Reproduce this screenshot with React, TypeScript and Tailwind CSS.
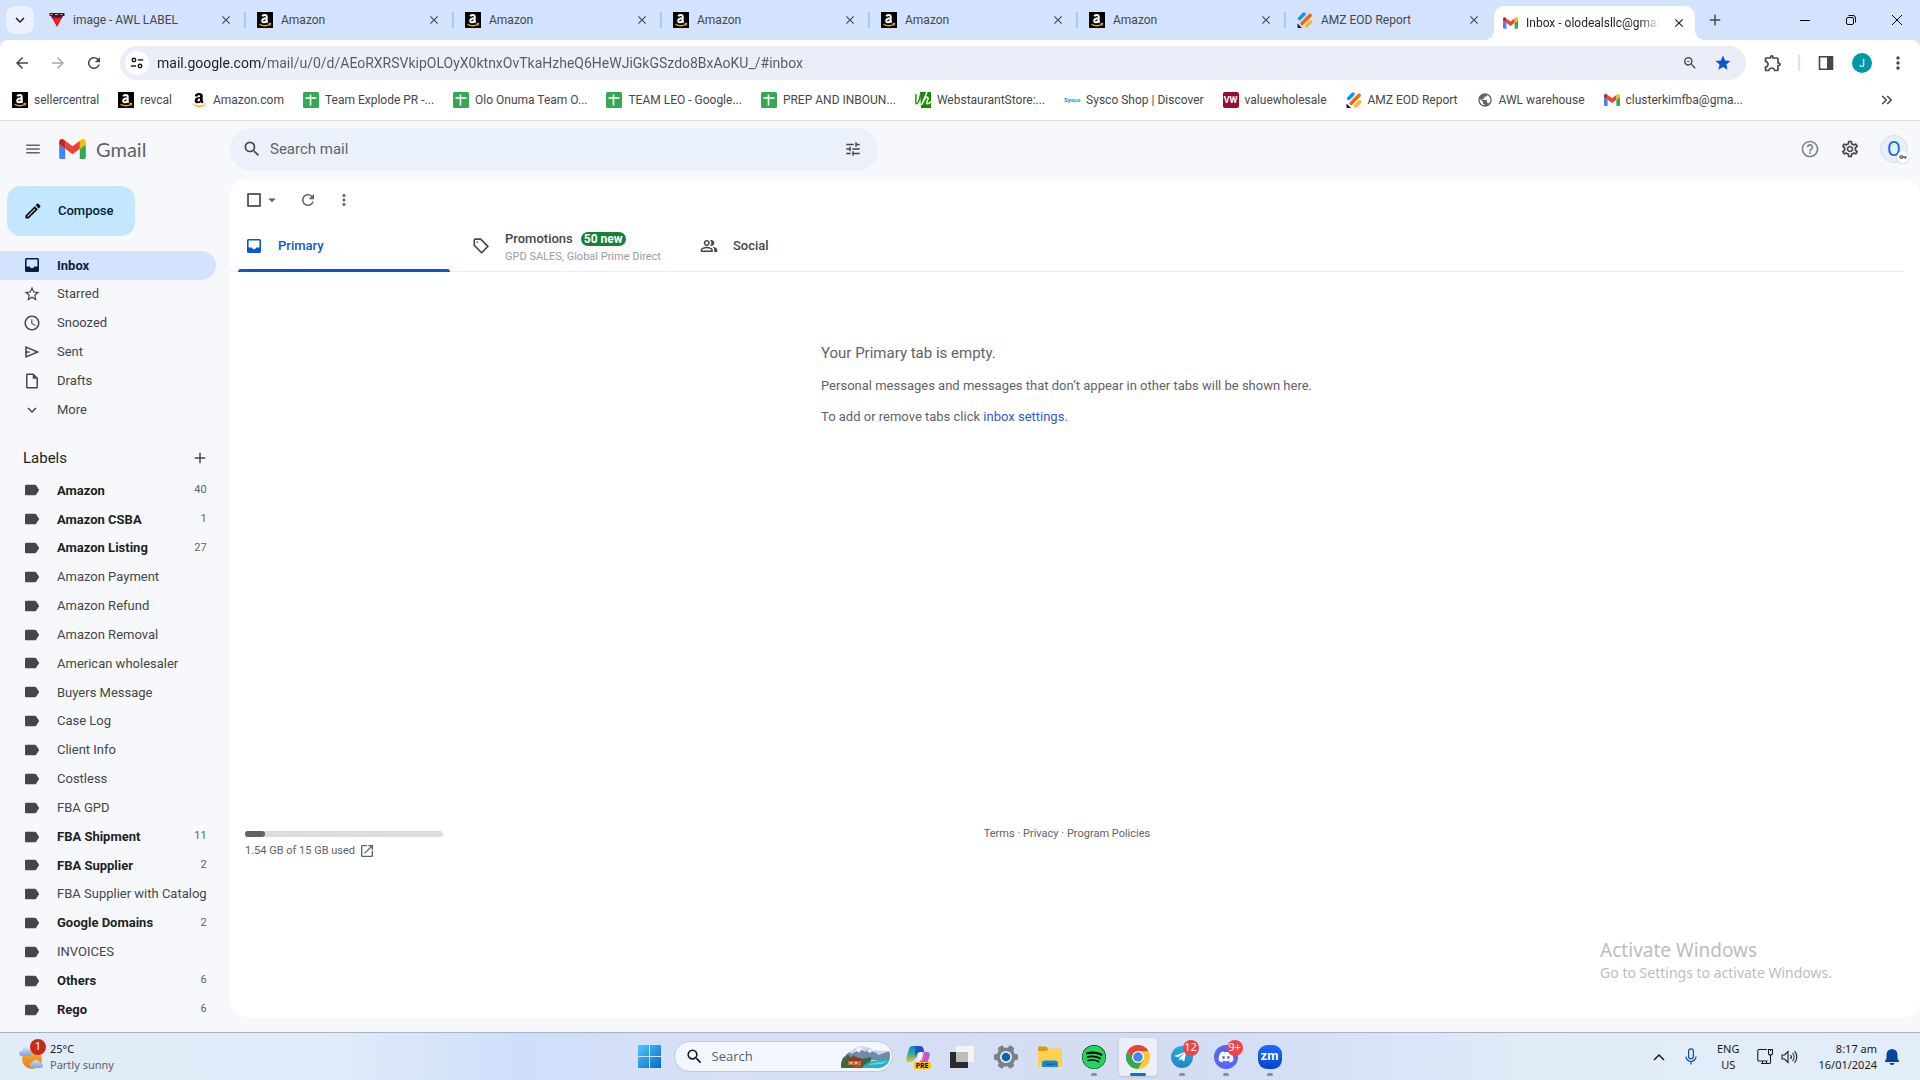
import type { ReactNode } from "react";
import clsx from "clsx";
import { FaAmazon, FaDiscord, FaSpotify, FaTelegramPlane } from "react-icons/fa";
import {
  MdAdd,
  MdArrowBack,
  MdArrowDropDown,
  MdArrowForward,
  MdClose,
  MdHelpOutline,
  MdKeyboardArrowDown,
  MdKeyboardDoubleArrowRight,
  MdMenu,
  MdMoreVert,
  MdOpenInNew,
  MdOutlineExtension,
  MdOutlineInsertDriveFile,
  MdOutlineModeEdit,
  MdOutlinePeopleAlt,
  MdOutlineSettings,
  MdPublic,
  MdRefresh,
  MdSchedule,
  MdSearch,
  MdStar,
  MdStarBorder,
  MdTune,
  MdVpnKey,
  MdZoomOut,
} from "react-icons/md";

/* ---------- logos ---------- */

const GmailLogo = ({ className }: { className: string }) => (
  <svg viewBox="52 42 88 66" className={className} aria-hidden="true">
    <path fill="#4285f4" d="M58 108h14V74L52 59v43c0 3.32 2.69 6 6 6" />
    <path fill="#34a853" d="M120 108h14c3.32 0 6-2.69 6-6V59l-20 15" />
    <path fill="#fbbc04" d="M120 48v26l20-15v-8c0-7.42-8.47-11.65-14.4-7.2" />
    <path fill="#ea4335" d="M72 74V48l24 18 24-18v26L96 92" />
    <path fill="#c5221f" d="M52 51v8l20 15V48l-5.6-4.2c-5.94-4.45-14.4-.22-14.4 7.2" />
  </svg>
);

const AmazonTile = () => (
  <svg viewBox="0 0 16 16" className="h-4 w-4" aria-hidden="true">
    <path d="M0 0h16v16H0z" />
    <path
      fill="none"
      stroke="#fff"
      strokeWidth="2"
      d="M5.3 4.4C5.8 2.7 9.7 2.4 9.7 4.8v4.1c0 .8.4 1.2 1 1.6M9.7 6.2C6.8 6.2 5.2 7 5.2 8.7c0 2.2 3.6 2.2 4.5-.6"
    />
    <path fill="none" stroke="#ff9900" strokeWidth="1.3" d="M2.5 12c3 2.3 7.500 2.300 10.500.3M11.500 11.700l2-.2-.5 2" />
  </svg>
);

const AmazonPlain = () => (
  <span className="relative h-4 w-4 overflow-hidden">
    <FaAmazon className="h-4 w-4 text-[#ff9900]" />
    <span className="absolute inset-x-0 top-0 h-[11px] overflow-hidden">
      <FaAmazon className="h-4 w-4 text-black" />
    </span>
  </span>
);

const SheetIcon = () => (
  <svg viewBox="0 0 16 16" className="h-4 w-4" aria-hidden="true">
    <rect width="16" height="16" rx="1.5" fill="#34a853" />
    <path stroke="#fff" strokeWidth="1.6" d="M2.5 6h11M7.5 2.5v11" />
  </svg>
);

const JotformIcon = () => (
  <svg viewBox="0 0 16 16" className="h-4 w-4" aria-hidden="true">
    <g strokeWidth="3.4" strokeLinecap="round">
      <path stroke="#0099ff" d="M2.6 6.5 7 2" />
      <path stroke="#ff6100" d="M5 11.5 13.2 3.3" />
      <path stroke="#ffb629" d="m9.6 14 4.2-4.2" />
    </g>
    <path fill="#0a1551" d="M.5 11.5v3.8c0 .4.3.7.7.7H5z" />
  </svg>
);

const LabelShield = () => (
  <svg viewBox="0 0 16 16" className="h-4 w-4" aria-hidden="true">
    <path fill="#2a1a4a" d="M.5 1h15v3H.5z" />
    <path fill="#f2b134" d="M1.5 2h2v1h-2zM6 2h3v1H6zM11.5 2h2v1h-2z" />
    <path fill="#3b1d5e" d="M2 4h12l-1.5 3h-9z" />
    <path fill="#e3121b" d="M3 5.5h2.5L8 11l2.5-5.5H13L8 15z" />
    <path fill="#ff1a1a" d="M5 6h6l-3 7z" />
  </svg>
);

const WebstaurantIcon = () => (
  <svg viewBox="0 0 16 16" className="h-4 w-4" aria-hidden="true">
    <path fill="#1b8a00" d="M5 0h11v16H6z" />
    <path fill="none" stroke="#fff" strokeWidth="1.5" d="M12 0 6.5 13 10 6.5c2-3 4-1 2.5 2s-1 5 4 1" />
    <path fill="none" stroke="#1b8a00" strokeWidth="1.4" d="M1 2 .8 11c1.5 3 4-3 4.5-8" />
  </svg>
);

const SyscoIcon = () => (
  <span className="flex h-4 w-4 items-center justify-center text-[6px] font-bold text-[#0091d5]">Sysco</span>
);

const VwIcon = () => (
  <span className="flex h-4 w-4 items-center justify-center rounded-xs bg-[#9b0a33] text-[9px] font-bold text-white">VW</span>
);

/* ---------- gmail glyphs that the icon set draws differently ---------- */

const InboxIcon = () => (
  <svg viewBox="0 0 18 18" className="h-[18px] w-[18px] shrink-0" fill="currentColor" fillRule="evenodd" aria-hidden="true">
    <path d="M3.5 2h11A1.5 1.5 0 0 1 16 3.5v11a1.5 1.5 0 0 1-1.5 1.5h-11A1.5 1.5 0 0 1 2 14.5v-11A1.5 1.5 0 0 1 3.5 2zm.1 1.6v6.9h3.2a2.3 2.3 0 0 0 4.4 0h3.2V3.6z" />
  </svg>
);

const LabelIcon = () => (
  <svg viewBox="0 0 18 18" className="h-[18px] w-[18px] shrink-0" fill="currentColor" aria-hidden="true">
    <path d="M3.4 3.7h8.4c.5 0 1 .25 1.300.65L16.200 9l-3.100 4.650c-.3.4-.8.650-1.300.650H3.400c-.8 0-1.400-.6-1.400-1.400V5.100c0-.8.6-1.400 1.400-1.400z" />
  </svg>
);

const SentIcon = () => (
  <svg viewBox="0 0 24 24" className="h-[18px] w-[18px]" fill="currentColor" aria-hidden="true">
    <path d="M3 20V4l19 8zm2-3 11.85-5L5 7v3.5l6 1.5-6 1.5z" />
  </svg>
);

/* ---------- data ---------- */

const browserTabs: { title: string; icon: ReactNode }[] = [
  { title: "image - AWL LABEL", icon: <LabelShield /> },
  { title: "Amazon", icon: <AmazonTile /> },
  { title: "Amazon", icon: <AmazonTile /> },
  { title: "Amazon", icon: <AmazonTile /> },
  { title: "Amazon", icon: <AmazonTile /> },
  { title: "Amazon", icon: <AmazonTile /> },
  { title: "AMZ EOD Report", icon: <JotformIcon /> },
];

const bookmarks: { title: string; icon: ReactNode }[] = [
  { title: "sellercentral", icon: <AmazonTile /> },
  { title: "revcal", icon: <AmazonTile /> },
  { title: "Amazon.com", icon: <AmazonPlain /> },
  { title: "Team Explode PR -...", icon: <SheetIcon /> },
  { title: "Olo Onuma Team O...", icon: <SheetIcon /> },
  { title: "TEAM LEO - Google...", icon: <SheetIcon /> },
  { title: "PREP AND INBOUN...", icon: <SheetIcon /> },
  { title: "WebstaurantStore:...", icon: <WebstaurantIcon /> },
  { title: "Sysco Shop | Discover", icon: <SyscoIcon /> },
  { title: "valuewholesale", icon: <VwIcon /> },
  { title: "AMZ EOD Report", icon: <JotformIcon /> },
  { title: "AWL warehouse", icon: <MdPublic className="h-[18px] w-4 text-[#5f6368]" /> },
  { title: "clusterkimfba@gma...", icon: <GmailLogo className="h-3 w-4" /> },
];

const folders: { title: string; icon: ReactNode }[] = [
  { title: "Inbox", icon: <InboxIcon /> },
  { title: "Starred", icon: <MdStarBorder className="h-[18px] w-[18px]" /> },
  { title: "Snoozed", icon: <MdSchedule className="h-[18px] w-[18px]" /> },
  { title: "Sent", icon: <SentIcon /> },
  { title: "Drafts", icon: <MdOutlineInsertDriveFile className="h-[18px] w-[18px]" /> },
  { title: "More", icon: <MdKeyboardArrowDown className="h-[18px] w-[18px]" /> },
];

const labels: { title: string; unread?: number }[] = [
  { title: "Amazon", unread: 40 },
  { title: "Amazon CSBA", unread: 1 },
  { title: "Amazon Listing", unread: 27 },
  { title: "Amazon Payment" },
  { title: "Amazon Refund" },
  { title: "Amazon Removal" },
  { title: "American wholesaler" },
  { title: "Buyers Message" },
  { title: "Case Log" },
  { title: "Client Info" },
  { title: "Costless" },
  { title: "FBA GPD" },
  { title: "FBA Shipment", unread: 11 },
  { title: "FBA Supplier", unread: 2 },
  { title: "FBA Supplier with Catalog" },
  { title: "Google Domains", unread: 2 },
  { title: "INVOICES" },
  { title: "Others", unread: 6 },
  { title: "Rego", unread: 6 },
];

/* ---------- browser chrome ---------- */

const IconButton = ({ label, className, children }: { label: string; className?: string; children: ReactNode }) => (
  <button type="button" aria-label={label} className={clsx("flex shrink-0 items-center justify-center", className)}>
    {children}
  </button>
);

const TabStrip = () => (
  <div className="flex h-10 items-center bg-[#d3e2fd] pl-[6px]">
    <IconButton label="Search tabs" className="h-7 w-7 rounded-[9px] bg-[#ebf1fe] text-[#1f1f1f]">
      <MdKeyboardArrowDown className="h-[18px] w-[18px]" />
    </IconButton>
    <div className="ml-1 flex h-full items-center">
      {browserTabs.map((tab, i) => (
        <div key={i} className="flex h-full w-52 items-center pl-[11px]">
          {tab.icon}
          <span className="ml-2 flex-1 truncate text-xs text-[#474747]">{tab.title}</span>
          <IconButton label="Close tab" className="mr-[10px] h-4 w-4 text-[#474747]">
            <MdClose className="h-[14px] w-[14px]" />
          </IconButton>
          <span className={clsx("h-4 w-[2px]", i < browserTabs.length - 1 && "bg-[#a8c7fa]")} />
        </div>
      ))}
    </div>
    <div className="relative flex h-[34px] w-[201px] items-center self-end rounded-t-[10px] bg-white pr-2 pl-[9px] before:absolute before:bottom-0 before:-left-[10px] before:h-[10px] before:w-[10px] before:bg-[radial-gradient(circle_at_0_0,transparent_10px,white_10px)] after:absolute after:-right-[10px] after:bottom-0 after:h-[10px] after:w-[10px] after:bg-[radial-gradient(circle_at_100%_0,transparent_10px,white_10px)]">
      <GmailLogo className="h-3 w-[15px]" />
      <span className="ml-2 mask-r-from-85% text-xs whitespace-nowrap text-[#1f1f1f]">Inbox - olodealsllc@gmai</span>
      <IconButton label="Close tab" className="ml-auto h-4 w-4 text-[#1f1f1f]">
        <MdClose className="h-[14px] w-[14px]" />
      </IconButton>
    </div>
    <IconButton label="New tab" className="ml-[10px] h-5 w-5 text-[#474747]">
      <MdAdd className="h-[18px] w-[18px]" />
    </IconButton>
    <div className="ml-auto flex h-full text-black">
      <IconButton label="Minimize" className="w-[46px]">
        <span className="h-px w-[10px] bg-black" />
      </IconButton>
      <IconButton label="Restore" className="w-[46px]">
        <svg viewBox="0 0 10 10" className="h-[10px] w-[10px]" fill="none" stroke="currentColor" aria-hidden="true">
          <rect x=".5" y="2.5" width="7" height="7" rx="1.5" />
          <path d="M2.5.5H7A2.5 2.5 0 0 1 9.5 3v4.5" />
        </svg>
      </IconButton>
      <IconButton label="Close" className="w-[46px]">
        <svg viewBox="0 0 10 10" className="h-[10px] w-[10px]" stroke="currentColor" aria-hidden="true">
          <path d="m0 0 10 10M10 0 0 10" />
        </svg>
      </IconButton>
    </div>
  </div>
);

const AddressBar = () => (
  <div className="flex h-[46px] items-center rounded-t-lg bg-white pr-3 text-[#474747]">
    <IconButton label="Back" className="w-9 pl-2">
      <MdArrowBack className="h-[18px] w-[18px]" />
    </IconButton>
    <IconButton label="Forward" className="w-9 pl-2 text-[#a9a9a9]">
      <MdArrowForward className="h-[18px] w-[18px]" />
    </IconButton>
    <IconButton label="Reload" className="w-9 pl-2">
      <MdRefresh className="h-[18px] w-[18px]" />
    </IconButton>
    <div className="ml-3 flex h-[34px] flex-1 items-center rounded-full bg-[#ebeef8] pr-[14px] pl-[5px]">
      <IconButton label="Site information" className="h-6 w-6 rounded-full bg-white text-[#1f1f1f]">
        <svg viewBox="0 0 16 16" className="h-[14px] w-[14px]" fill="none" stroke="currentColor" strokeWidth="1.7" aria-hidden="true">
          <circle cx="4.5" cy="4.5" r="2" />
          <path d="M9 4.5h6" />
          <circle cx="11.5" cy="11.5" r="2" />
          <path d="M1 11.5h6" />
        </svg>
      </IconButton>
      <input
        aria-label="Address"
        readOnly
        className="ml-2 flex-1 bg-[linear-gradient(90deg,#1f1f1f_104px,#55585c_104px)] bg-clip-text text-sm text-transparent outline-none"
        value="mail.google.com/mail/u/0/d/AEoRXRSVkipOLOyX0ktnxOvTkaHzheQ6HeWJiGkGSzdo8BxAoKU_/#inbox"
      />
      <IconButton label="Zoom" className="w-4">
        <MdZoomOut className="h-[18px] w-[18px]" />
      </IconButton>
      <IconButton label="Edit bookmark" className="ml-4 w-[18px] text-[#0b57d0]">
        <MdStar className="h-5 w-5" />
      </IconButton>
    </div>
    <IconButton label="Extensions" className="ml-[17px] w-5">
      <MdOutlineExtension className="h-5 w-5" />
    </IconButton>
    <span className="ml-[15px] h-4 w-[2px] bg-[#d3e2fd]" />
    <IconButton label="Side panel" className="ml-[18px] w-4">
      <svg viewBox="0 0 16 16" className="h-4 w-4" aria-hidden="true">
        <path fill="none" stroke="currentColor" strokeWidth="1.6" d="M1.5 1.8h13v12.4h-13z" />
        <path fill="currentColor" d="M9 1.5h6v13H9z" />
      </svg>
    </IconButton>
    <IconButton label="Profile" className="ml-[18px] h-5 w-5 rounded-full bg-[#0097a7] text-[10px] text-white">
      J
    </IconButton>
    <IconButton label="Menu" className="ml-4 w-5">
      <MdMoreVert className="h-5 w-5" />
    </IconButton>
  </div>
);

const BookmarkBar = () => (
  <nav aria-label="Bookmarks" className="flex h-[35px] items-center gap-[19px] border-b border-[#dfdfdf] bg-white pb-[6px] pl-3 text-xs text-[#474747]">
    {bookmarks.map((item) => (
      <a key={item.title} href="#" className="flex shrink-0 items-center gap-[6px]">
        {item.icon}
        <span>{item.title}</span>
      </a>
    ))}
    <IconButton label="More bookmarks" className="mr-6 ml-auto">
      <MdKeyboardDoubleArrowRight className="h-[18px] w-[18px]" />
    </IconButton>
  </nav>
);

/* ---------- gmail ---------- */

const GmailHeader = () => (
  <header className="mb-[2px] flex h-14 shrink-0 items-center">
    <div className="flex w-[230px] items-center pl-6">
      <IconButton label="Main menu" className="w-[18px] text-[#5f6368]">
        <MdMenu className="h-[22px] w-[22px]" />
      </IconButton>
      <GmailLogo className="ml-[17px] h-5 w-[27px]" />
      <span className="ml-[10px] font-['Lato',sans-serif] text-xl text-[#5f6368]">Gmail</span>
    </div>
    <div className="flex h-[43px] w-[648px] items-center rounded-full bg-[#eaf1fb] pr-4 pl-3 text-[#444746]">
      <IconButton label="Search" className="w-5">
        <MdSearch className="h-[22px] w-[22px]" />
      </IconButton>
      <input type="search" aria-label="Search mail" placeholder="Search mail" className="ml-2 flex-1 text-[15px] outline-none placeholder:text-[#5f6368]" />
      <IconButton label="Show search options" className="w-[18px]">
        <MdTune className="h-[22px] w-[22px]" />
      </IconButton>
    </div>
    <div className="ml-auto flex items-center gap-5 pr-3 text-[#5f6368]">
      <IconButton label="Support" className="w-5 text-[#80868b]">
        <MdHelpOutline className="h-[22px] w-[22px]" />
      </IconButton>
      <IconButton label="Settings" className="w-5 text-[#444746]">
        <MdOutlineSettings className="h-[22px] w-[22px]" />
      </IconButton>
      <button type="button" aria-label="Google account" className="relative flex h-7 w-7 items-center justify-center rounded-full border border-[#d2dff5] bg-[#e6effb] text-xl text-[#1a66e8]">
        O
        <span className="absolute -right-[2px] -bottom-[1px] flex h-3 w-3 items-center justify-center rounded-full bg-white shadow">
          <MdVpnKey className="h-2 w-2 text-[#5f6368]" />
        </span>
      </button>
    </div>
  </header>
);

const Sidebar = () => (
  <aside className="w-[230px] shrink-0 text-[13px] text-[#444746]">
    <button type="button" className="mt-[7px] ml-[7px] flex h-[50px] w-32 items-center gap-[15px] rounded-[14px] bg-[#c2e7ff] pl-4 font-medium text-[#001d35]">
      <MdOutlineModeEdit className="h-5 w-5 text-black" />
      Compose
    </button>
    <nav aria-label="Folders" className="mt-[15px] grid h-[173px] auto-rows-fr">
      {folders.map((folder, i) => (
        <a
          key={folder.title}
          href="#"
          className={clsx("mr-[14px] flex items-center gap-4 rounded-r-full pl-[23px]", i === 0 && "bg-[#d3e3fd] font-bold text-[#041e49]")}
        >
          {folder.icon}
          {folder.title}
        </a>
      ))}
    </nav>
    <div className="mt-5 flex h-7 items-center justify-between pr-[21px] pl-[23px] text-[#1f1f1f]">
      <h2 className="text-[15px]">Labels</h2>
      <IconButton label="Create new label" className="text-[#444746]">
        <MdAdd className="h-[18px] w-[18px]" />
      </IconButton>
    </div>
    <nav aria-label="Labels" className="mt-1 grid h-[548px] auto-rows-fr">
      {labels.map((label) => (
        <a key={label.title} href="#" className="flex items-center gap-4 pr-[25px] pl-[23px]">
          <LabelIcon />
          <span className={clsx("whitespace-nowrap", label.unread && "font-bold text-[#1f1f1f]")}>{label.title}</span>
          {label.unread ? <span className="ml-auto text-[11px] text-[#5f6368]">{label.unread}</span> : null}
        </a>
      ))}
    </nav>
  </aside>
);

const InboxPanel = () => (
  <main className="mb-[15px] flex flex-1 flex-col rounded-2xl bg-white text-[13px] text-[#5f6368]">
    <div className="flex h-[42px] items-center pl-[17px] text-[#5f6368]">
      <input type="checkbox" aria-label="Select" className="h-[14px] w-[14px] appearance-none rounded-[1px] border-2 border-[#5f6368]" />
      <IconButton label="Select options" className="ml-[2px]">
        <MdArrowDropDown className="h-[18px] w-[18px]" />
      </IconButton>
      <IconButton label="Refresh" className="ml-[18px]">
        <MdRefresh className="h-[18px] w-[18px]" />
      </IconButton>
      <IconButton label="More" className="ml-[18px]">
        <MdMoreVert className="h-[18px] w-[18px]" />
      </IconButton>
    </div>

    <div role="tablist" className="mr-4 flex h-[51px] gap-4 border-b border-[#eceff1] pl-2 text-[#444746]">
      <button type="button" role="tab" aria-selected="true" className="relative flex w-[212px] items-center gap-[15px] pl-[7px] font-medium text-[#0b57d0] after:absolute after:inset-x-0 after:-bottom-px after:h-[3px] after:rounded-t-sm after:bg-[#0b57d0]">
        <InboxIcon />
        Primary
      </button>
      <button type="button" role="tab" aria-selected="false" className="flex w-[212px] items-center gap-[15px] pl-[6px] text-left">
        <svg viewBox="0 0 18 18" className="h-[18px] w-[18px]" fill="none" stroke="currentColor" strokeWidth="1.6" aria-hidden="true">
          <path d="M2.3 2.8v5.6l7.3 7.3 6.3-6.3L8.6 2.1H3z" strokeLinejoin="round" />
          <circle cx="5.2" cy="5.2" r=".8" fill="currentColor" stroke="none" />
        </svg>
        <span className="pt-[2px]">
          <span className="flex items-center gap-2 font-medium">
            Promotions
            <span className="rounded-full bg-[#188038] px-[3px] text-xs leading-[14px] font-bold text-white">50 new</span>
          </span>
          <span className="block text-[11px] leading-4 text-[#9a9da1]">GPD SALES, Global Prime Direct</span>
        </span>
      </button>
      <button type="button" role="tab" aria-selected="false" className="flex w-[212px] items-center gap-[15px] pl-[6px] font-medium">
        <MdOutlinePeopleAlt className="h-[18px] w-[18px]" />
        Social
      </button>
    </div>

    <div className="mx-auto mt-[70px] flex w-[508px] flex-col gap-3 pr-4">
      <p className="text-[15px] leading-[22px]">Your Primary tab is empty.</p>
      <p className="leading-[19px]">Personal messages and messages that don’t appear in other tabs will be shown here.</p>
      <p className="leading-[19px]">
        To add or remove tabs click{" "}
        <a href="#" className="text-[#3457d5]">
          inbox settings
        </a>
        .
      </p>
    </div>

    <footer className="mt-auto mb-[158px] grid grid-cols-3 items-start pr-[31px] pl-[15px] text-[11px]">
      <div>
        <div className="mt-[5px] h-[6px] w-[198px] rounded-full bg-[#dadce0]">
          <div className="h-full rounded-full bg-[#5f6368]" style={{ width: `${(1.54 / 15) * 100}%` }} />
        </div>
        <div className="mt-[6px] flex items-center gap-1">
          1.54 GB of 15 GB used
          <a href="#" aria-label="Manage storage">
            <MdOpenInNew className="h-4 w-4" />
          </a>
        </div>
      </div>
      <p className="text-center leading-4">
        <a href="#">Terms</a> · <a href="#">Privacy</a> · <a href="#">Program Policies</a>
      </p>
    </footer>
  </main>
);

/* ---------- taskbar ---------- */

const WindowsLogo = () => (
  <svg viewBox="0 0 23 23" className="h-[23px] w-[23px]" aria-hidden="true">
    <defs>
      <linearGradient id="win" x1="0" y1="0" x2="1" y2="1">
        <stop offset="0" stopColor="#4cc9fb" />
        <stop offset="1" stopColor="#0669c8" />
      </linearGradient>
    </defs>
    <path fill="url(#win)" d="M0 0h11v11H0zM12 0h11v11H12zM0 12h11v11H0zM12 12h11v11H12z" />
  </svg>
);

const LakeScene = () => (
  <svg viewBox="0 0 50 24" className="h-6 w-[50px]" aria-hidden="true">
    <defs>
      <clipPath id="lake">
        <path d="M1 22C0 14 7 8 14 4c5-4 14-3 18 1l16 1c2 0 2 3 2 6-1 8-7 12-17 11H4c-2 0-3 0-3-1z" />
      </clipPath>
    </defs>
    <g clipPath="url(#lake)">
      <path fill="#c4d8ee" d="M0 0h50v24H0z" />
      <path fill="#7289a8" d="m0 13 8-7 4 3 7-9 6 7 6-5 7 8 12-4v9H0z" />
      <path fill="#eef4fb" d="m13 8 6-8 5 6-3-1-2 3-2-2zM27 6l4-4 5 6-4-2-2 2z" />
      <path fill="#39693f" d="M0 24V12l3-3 2 4 3-4 3 5 3-4 3 5 14-3v4l-8 8z" />
      <path fill="#1fb4c6" d="M22 24c2-7 11-9 28-10v10z" />
      <path fill="#68d5dc" d="M28 20c6-3 12-3 20-4l-6 3z" />
      <path fill="#8a3f24" d="m6 15 7-4 10 3v2H6z" />
      <path fill="#c4703a" d="M8 16h13v4H8z" />
      <path fill="#f3c66b" d="M10 17h2v2h-2zM15 17h2v2h-2z" />
      <path fill="#e0472c" d="m13 21 9-1-2 2h-6z" />
    </g>
  </svg>
);

const CopilotIcon = () => (
  <span className="relative h-6 w-6">
    <svg viewBox="0 0 24 24" className="h-6 w-6" aria-hidden="true">
      <defs>
        <linearGradient id="cop-a" x1="0" y1="0" x2="0" y2="1">
          <stop offset="0" stopColor="#1a78dd" />
          <stop offset=".5" stopColor="#2bb38d" />
          <stop offset="1" stopColor="#f2c22f" />
        </linearGradient>
        <linearGradient id="cop-b" x1="1" y1="0" x2="0" y2="1">
          <stop offset="0" stopColor="#a259e8" />
          <stop offset=".6" stopColor="#ec5b9e" />
          <stop offset="1" stopColor="#f78a4b" />
        </linearGradient>
      </defs>
      <path fill="url(#cop-a)" d="M6.5 1H15c-2 0-3 1-3.6 3L8.5 14c-.6 2-1.5 3-3.5 3H2.5C0 17-.3 15 .5 12.5L3 4c.6-2 1.5-3 3.5-3z" />
      <path fill="#1756c8" d="M9 1h5c2 0 3 1 3.5 3l.8 3h-4c-2 0-2.8 1-3.3 2.500L9.500 14z" />
      <path fill="url(#cop-b)" d="M17 7h4c2.5 0 3.3 2 2.5 4.5L21 20c-.6 2-1.5 3-3.5 3H9c2 0 3-1 3.6-3l2.7-10c.4-1.5.7-2.5 1.7-3z" />
      <path fill="#fff" opacity=".75" d="M13.5 7.5H18l-2.4 8H11z" />
    </svg>
    <span className="absolute -right-px bottom-0 rounded-xs bg-[#fdc30a] px-[2px] text-[7px] leading-[7px] font-bold text-black">PRE</span>
  </span>
);

const TaskViewIcon = () => (
  <svg viewBox="0 0 24 24" className="h-6 w-6" aria-hidden="true">
    <path fill="#2b2b2b" d="M0 7h18v16H0z" />
    <path fill="#f4f4f4" d="M6 1h18v16H6z" />
    <path fill="#bdbdbd" d="M6 7h12v10H6z" />
  </svg>
);

const GearIcon = () => (
  <svg viewBox="0 0 24 24" className="h-6 w-6" aria-hidden="true">
    <g fill="#78828c">
      <circle cx="12" cy="12" r="9.5" />
      <rect x="9" y="0" width="6" height="24" rx="1.5" transform="rotate(30 12 12)" />
      <rect x="9" y="0" width="6" height="24" rx="1.5" transform="rotate(90 12 12)" />
      <rect x="9" y="0" width="6" height="24" rx="1.5" transform="rotate(150 12 12)" />
    </g>
    <circle cx="12" cy="12" r="6" fill="#e9edf1" />
    <circle cx="12" cy="12" r="4.3" fill="#1262b3" />
  </svg>
);

const FolderIcon = () => (
  <svg viewBox="0 0 24 24" className="h-6 w-6" aria-hidden="true">
    <path fill="#d99a0b" d="M0 2.5C0 2 .5 1.5 1 1.5h7L10.5 4v5H0z" />
    <path fill="#fdd054" d="M0 6h8.5l2-2.5H23c.6 0 1 .4 1 1V21c0 .6-.4 1-1 1H1c-.6 0-1-.4-1-1z" />
    <path fill="#1a86dc" d="M4 22v-4c0-1.5 1-2.5 2.5-2.5h11c1.5 0 2.5 1 2.5 2.5v4z" />
    <path fill="#0b62b0" d="M7.5 18.5h9V20h-9z" />
  </svg>
);

const ChromeIcon = () => (
  <svg viewBox="0 0 48 48" className="h-6 w-6" aria-hidden="true">
    <circle cx="24" cy="24" r="24" fill="#fcc934" />
    <path fill="#ea4335" d="M24 24V12h20.8A24 24 0 0 0 3.2 12l10.4 18z" />
    <path fill="#34a853" d="M3.2 12A24 24 0 0 0 24 48l10.4-18L24 24 13.6 30z" />
    <circle cx="24" cy="24" r="12" fill="#fff" />
    <circle cx="24" cy="24" r="9.5" fill="#4285f4" />
  </svg>
);

const TelegramIcon = () => (
  <span className="flex h-[22px] w-[22px] items-center justify-center rounded-full bg-linear-to-b from-[#2fa9e0] to-[#1c86c2] text-white">
    <FaTelegramPlane className="mr-[2px] h-[13px] w-[13px]" />
  </span>
);

const DiscordIcon = () => (
  <span className="flex h-6 w-6 items-center justify-center rounded-full bg-[#5865f2] text-white">
    <FaDiscord className="h-4 w-4" />
  </span>
);

const ZoomIcon = () => (
  <span className="flex h-6 w-6 items-center justify-center rounded-[9px] bg-linear-to-b from-[#1a6cff] to-[#0642cf] pb-[2px] font-['Roboto',sans-serif] text-[13px] font-bold text-white">
    zm
  </span>
);

const taskbarApps: { name: string; icon: ReactNode; state?: "open" | "active"; badge?: string }[] = [
  { name: "Copilot", icon: <CopilotIcon /> },
  { name: "Task View", icon: <TaskViewIcon /> },
  { name: "Settings", icon: <GearIcon /> },
  { name: "File Explorer", icon: <FolderIcon /> },
  {
    name: "Spotify",
    icon: (
      <span className="rounded-full bg-black">
        <FaSpotify className="h-6 w-6 text-[#1ed760]" />
      </span>
    ),
    state: "open",
  },
  { name: "Google Chrome", icon: <ChromeIcon />, state: "active" },
  { name: "Telegram", icon: <TelegramIcon />, state: "open", badge: "12" },
  { name: "Discord", icon: <DiscordIcon />, state: "open", badge: "9+" },
  { name: "Zoom", icon: <ZoomIcon />, state: "open" },
];

const WeatherIcon = () => (
  <svg viewBox="0 0 28 28" className="h-7 w-7" aria-hidden="true">
    <defs>
      <linearGradient id="sun" x1="0" y1="0" x2="0" y2="1">
        <stop offset="0" stopColor="#f7b52c" />
        <stop offset="1" stopColor="#ee7623" />
      </linearGradient>
      <linearGradient id="cloud" x1="0" y1="0" x2="0" y2="1">
        <stop offset="0" stopColor="#cfe0f8" />
        <stop offset="1" stopColor="#7ba3e0" />
      </linearGradient>
    </defs>
    <circle cx="14" cy="16" r="10" fill="url(#sun)" />
    <path fill="url(#cloud)" d="M4 13c-4 0-4-5 0-5 0-4 7-5 8 0 3 0 3 5 0 5z" />
    <path fill="url(#cloud)" d="M14 25c-3 0-4-5 0-5 1-4 7-4 8 0 4 0 4 5 0 5z" />
  </svg>
);

const Taskbar = () => (
  <div className="grid h-12 shrink-0 grid-cols-[1fr_auto_1fr] items-center border-t border-[#a9b3c2] bg-[linear-gradient(90deg,#e0edf8_0%,#dfebf8_18%,#cfdefb_27%,#d8e0f5_38%,#d3dcf1_60%,#d5e0f7_68%,#e1ecf8_80%,#e1edf8_100%)] font-['Noto_Sans',sans-serif] text-[11px] text-[#1b1b1b]">
    <button type="button" className="flex items-center pl-[18px] text-left">
      <span className="relative">
        <WeatherIcon />
        <span className="absolute -top-1 right-0 flex h-4 w-4 items-center justify-center rounded-full bg-[#c42b1c] text-white">1</span>
      </span>
      <span className="ml-1 leading-4">
        <span className="block">25°C</span>
        <span className="block text-[#5d6066]">Partly sunny</span>
      </span>
    </button>

    <div className="flex items-center">
      <IconButton label="Start" className="mr-[3px] h-[38px] w-[42px]">
        <WindowsLogo />
      </IconButton>
      <label className="mr-[3px] flex h-[31px] w-[219px] items-center rounded-full border border-[#c0c8da] bg-[#f3f6fd] pr-[2px] pl-[10px]">
        <MdSearch className="h-[19px] w-[19px]" />
        <input
          type="text"
          aria-label="Search"
          placeholder="Search"
          className="ml-2 w-0 flex-1 font-['Open_Sans',sans-serif] text-[13px] outline-none placeholder:text-[#5d6066]"
        />
        <LakeScene />
      </label>
      {taskbarApps.map((app) => (
        <button
          key={app.name}
          type="button"
          aria-label={app.name}
          className={clsx("relative mx-[3px] flex h-[38px] w-[38px] items-center justify-center rounded-[4px]", app.state === "active" && "bg-[#eceff9] shadow-sm")}
        >
          {app.icon}
          {app.badge ? (
            <span className="absolute top-[2px] right-[2px] flex h-4 w-4 items-center justify-center rounded-full bg-[#ee4444] text-[11px] text-white">
              {app.badge}
            </span>
          ) : null}
          {app.state ? (
            <span className={clsx("absolute bottom-0 h-[3px] rounded-full", app.state === "active" ? "w-4 bg-[#0078d4]" : "w-[6px] bg-[#8a8d94]")} />
          ) : null}
        </button>
      ))}
    </div>

    <div className="flex items-center justify-end pr-[21px]">
      <IconButton label="Show hidden icons">
        <svg viewBox="0 0 12 8" className="h-2 w-3" fill="none" stroke="currentColor" strokeWidth="1.5" aria-hidden="true">
          <path d="M1 7 6 2l5 5" />
        </svg>
      </IconButton>
      <IconButton label="Microphone" className="ml-5 text-[#0d4ea6]">
        <svg viewBox="0 0 12 17" className="h-[17px] w-3" fill="none" stroke="currentColor" strokeWidth="1.2" aria-hidden="true">
          <rect x="3.6" y=".8" width="4.8" height="10" rx="2.4" />
          <path d="M1 8.5a5 5 0 0 0 10 0M6 13.5v3" />
        </svg>
      </IconButton>
      <button type="button" className="ml-5 text-center leading-4">
        ENG
        <br />
        US
      </button>
      <IconButton label="Network and volume" className="ml-[18px] gap-2">
        <svg viewBox="0 0 16 17" className="h-[17px] w-4" fill="none" stroke="currentColor" strokeWidth="1.1" aria-hidden="true">
          <path d="M10 1.5H2A1.2 1.2 0 0 0 .8 2.7v9c0 .7.5 1.300 1.200 1.300h8.500M4 15.500h9M5.500 13v2.500M9.500 13v2.500M13.500 7v8.500M11.500 1.500h4v3.500c0 1-.8 2-2 2s-2-1-2-2zM13.500 1v2" />
        </svg>
        <svg viewBox="0 0 17 14" className="h-[14px] w-[17px]" fill="none" stroke="currentColor" strokeWidth="1.1" aria-hidden="true">
          <path d="M1 5v4h2.5L7 12.5v-11L3.5 5zM9.5 5a3 3 0 0 1 0 4M11.5 3a6 6 0 0 1 0 8M13.5 1.2a8.500 8.500 0 0 1 0 11.600" />
        </svg>
      </IconButton>
      <button type="button" className="ml-5 text-right leading-4">
        8:17 am
        <br />
        16/01/2024
      </button>
      <IconButton label="Notifications" className="ml-2 text-[#0b459b]">
        <svg viewBox="0 0 14 16" className="h-4 w-[14px]" fill="currentColor" aria-hidden="true">
          <path d="M7 0a5.5 5.5 0 0 1 5.5 5.5v4L14 12v1H0v-1l1.5-2.500v-4A5.500 5.500 0 0 1 7 0zM4.500 14h5a2.500 2 0 0 1-5 0z" />
        </svg>
      </IconButton>
    </div>
  </div>
);

export default function App() {
  return (
    <div className="relative flex min-h-screen flex-col bg-[#f6f8fc] font-['Roboto',sans-serif]">
      <div className="bg-[#d3e2fd]">
        <TabStrip />
        <AddressBar />
        <BookmarkBar />
      </div>
      <GmailHeader />
      <div className="flex flex-1">
        <Sidebar />
        <InboxPanel />
      </div>
      <Taskbar />

      {/* system watermark floats over everything */}
      <div className="pointer-events-none absolute right-[88px] bottom-24 font-['Noto_Sans',sans-serif] text-[#bdbdbd]">
        <p className="text-[19px] leading-6">Activate Windows</p>
        <p className="text-sm leading-[22px]">Go to Settings to activate Windows.</p>
      </div>
    </div>
  );
}
